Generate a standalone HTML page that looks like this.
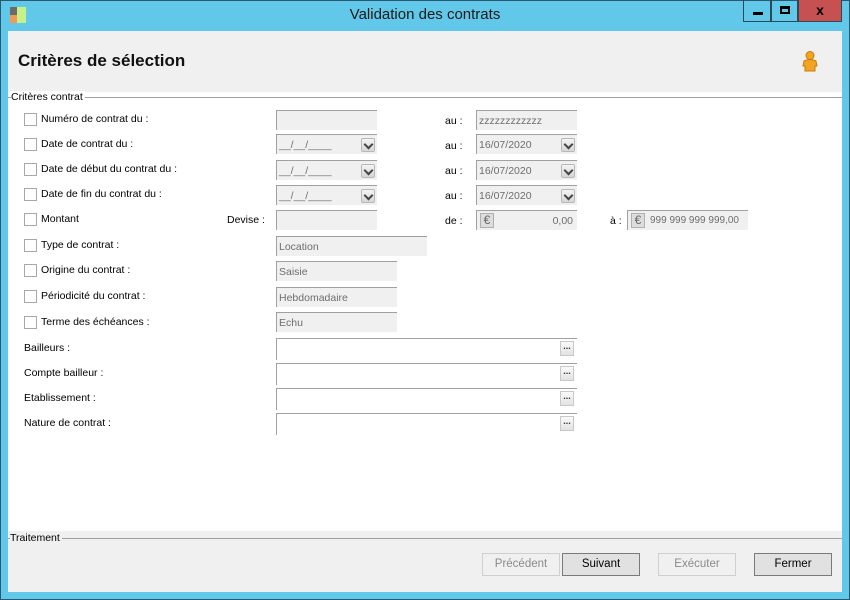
<!DOCTYPE html>
<html><head><meta charset="utf-8"><style>
*{margin:0;padding:0;box-sizing:border-box}
body{width:850px;height:600px;overflow:hidden;background:#62c8ea;font-family:"Liberation Sans",Arial,sans-serif;font-size:10.5px;color:#000;position:relative}
.a{position:absolute;white-space:nowrap}
#frame{left:0;top:0;width:850px;height:600px;border:1px solid #2a5870}
#title{left:0;top:6px;width:850px;text-align:center;font-size:15px;color:#1a1a1a}
.wb{top:0;height:22px;border:1px solid #2a4a5a;border-top:none}
#content{left:8px;top:31px;width:834px;height:561px;background:#fff}
#hdr{left:8px;top:31px;width:834px;height:61px;background:#f0f0f0}
#h1{left:18px;top:51px;font-size:17px;font-weight:bold;color:#111}
.lg{color:#000;background:#fff;padding-right:2px}
.cb{width:13px;height:13px;border:1px solid #a8a8a8;background:#fff}
.f{height:20px;background:#f0f0f0;border-top:1px solid #a0a0a0;border-left:1px solid #a0a0a0;color:#6d6d6d;padding:4px 0 0 2px;font-size:10.5px}
.dd{width:14px;height:14px;border:1px solid #b8b8b8;border-radius:2px;background:linear-gradient(#f4f4f4,#d6d6d6);top:3px;right:2px}
.dd:after{content:"";position:absolute;left:3px;top:2px;width:5px;height:5px;border-right:2px solid #444;border-bottom:2px solid #444;transform:rotate(45deg)}
.e{width:301px;height:22px;background:#fff;border-top:1px solid #a0a0a0;border-left:1px solid #a0a0a0}
.eb{right:3px;top:2px;width:14px;height:15px;border:1px solid #c8c8c8;background:linear-gradient(#fafafa,#e2e2e2);font-size:9px;line-height:9px;text-align:center;color:#333;font-weight:bold}
.eu{width:14px;height:15px;border:1px solid #b0b0b0;background:#ddd;color:#666;font-size:12px;line-height:13px;text-align:center;left:3px;top:2px}
.btn{top:553px;width:78px;height:23px;border:1px solid #adadad;text-align:center;line-height:21px;font-size:11.5px}
</style></head><body>
<div class="a" id="frame"></div>
<div class="a" style="left:10px;top:7px;width:7px;height:8px;background:#6b6b6b"></div>
<div class="a" style="left:10px;top:15px;width:7px;height:8px;background:#f09a5a"></div>
<div class="a" style="left:17px;top:7px;width:9px;height:16px;background:#c6f08a"></div>
<div class="a" id="title">Validation des contrats</div>
<div class="a wb" style="left:743px;width:28px"><div class="a" style="left:9px;top:12px;width:10px;height:3px;background:#000"></div></div>
<div class="a wb" style="left:771px;width:27px"><div class="a" style="left:8px;top:6px;width:10px;height:8px;border:2px solid #000;border-top-width:3px"></div></div>
<div class="a wb" style="left:798px;width:44px;background:#c75050"><div class="a" style="left:0;top:2px;width:42px;text-align:center;font-weight:bold;font-size:14px">x</div></div>
<div class="a" id="content"></div>
<div class="a" id="hdr"></div>
<div class="a" id="h1">Critères de sélection</div>
<svg class="a" style="left:801px;top:50px" width="18" height="22" viewBox="0 0 18 22"><circle cx="9" cy="5.5" r="4" fill="#f3a420" stroke="#c77d10"/><path d="M3 11 Q9 8 15 11 L16 16 L14 16 L14 21 L4 21 L4 16 L2 16 Z" fill="#f3a420" stroke="#c77d10"/></svg>
<div class="a" style="left:8px;top:97px;width:834px;height:1px;background:#a0a0a0"></div>
<div class="a lg" style="left:11px;top:91px">Critères contrat</div>

<div class="a cb" style="left:24px;top:113px"></div><div class="a" style="left:41px;top:113px">Numéro de contrat du :</div>
<div class="a cb" style="left:24px;top:138px"></div><div class="a" style="left:41px;top:138px">Date de contrat du :</div>
<div class="a cb" style="left:24px;top:163px"></div><div class="a" style="left:41px;top:163px">Date de début du contrat du :</div>
<div class="a cb" style="left:24px;top:188px"></div><div class="a" style="left:41px;top:188px">Date de fin du contrat du :</div>
<div class="a cb" style="left:24px;top:213px"></div><div class="a" style="left:41px;top:213px">Montant</div>
<div class="a cb" style="left:24px;top:239px"></div><div class="a" style="left:41px;top:239px">Type de contrat :</div>
<div class="a cb" style="left:24px;top:264px"></div><div class="a" style="left:41px;top:264px">Origine du contrat :</div>
<div class="a cb" style="left:24px;top:290px"></div><div class="a" style="left:41px;top:290px">Périodicité du contrat :</div>
<div class="a cb" style="left:24px;top:316px"></div><div class="a" style="left:41px;top:316px">Terme des échéances :</div>
<div class="a" style="left:24px;top:342px">Bailleurs :</div>
<div class="a" style="left:24px;top:367px">Compte bailleur :</div>
<div class="a" style="left:24px;top:392px">Etablissement :</div>
<div class="a" style="left:24px;top:417px">Nature de contrat :</div>
<div class="a" style="left:227px;top:214px">Devise :</div>

<div class="a f" style="left:276px;top:110px;width:101px"></div>
<div class="a f" style="left:276px;top:134px;width:101px">__/__/____<div class="a dd"></div></div>
<div class="a f" style="left:276px;top:160px;width:101px">__/__/____<div class="a dd"></div></div>
<div class="a f" style="left:276px;top:185px;width:101px">__/__/____<div class="a dd"></div></div>
<div class="a f" style="left:276px;top:210px;width:101px"></div>
<div class="a f" style="left:276px;top:236px;width:151px">Location</div>
<div class="a f" style="left:276px;top:261px;width:121px">Saisie</div>
<div class="a f" style="left:276px;top:287px;width:121px">Hebdomadaire</div>
<div class="a f" style="left:276px;top:312px;width:121px">Echu</div>

<div class="a" style="left:445px;top:115px">au :</div>
<div class="a" style="left:445px;top:140px">au :</div>
<div class="a" style="left:445px;top:165px">au :</div>
<div class="a" style="left:445px;top:190px">au :</div>
<div class="a" style="left:445px;top:215px">de :</div>
<div class="a" style="left:610px;top:215px">à :</div>
<div class="a f" style="left:476px;top:110px;width:101px">zzzzzzzzzzzz</div>
<div class="a f" style="left:476px;top:134px;width:101px">16/07/2020<div class="a dd"></div></div>
<div class="a f" style="left:476px;top:160px;width:101px">16/07/2020<div class="a dd"></div></div>
<div class="a f" style="left:476px;top:185px;width:101px">16/07/2020<div class="a dd"></div></div>
<div class="a f" style="left:476px;top:210px;width:101px;text-align:right;padding-right:4px"><div class="a eu">€</div>0,00</div>
<div class="a f" style="left:627px;top:210px;width:121px;padding-left:22px;font-size:10px"><div class="a eu">€</div>999 999 999 999,00</div>

<div class="a e" style="left:276px;top:338px"><div class="a eb">...</div></div>
<div class="a e" style="left:276px;top:363px"><div class="a eb">...</div></div>
<div class="a e" style="left:276px;top:388px"><div class="a eb">...</div></div>
<div class="a e" style="left:276px;top:413px"><div class="a eb">...</div></div>

<div class="a" style="left:8px;top:531px;width:834px;height:61px;background:#f0f0f0"></div>
<div class="a" style="left:8px;top:538px;width:834px;height:1px;background:#a0a0a0"></div>
<div class="a" style="left:10px;top:532px;background:#f0f0f0;padding-right:2px">Traitement</div>
<div class="a btn" style="left:482px;color:#8a8a8a;border-color:#cfcfcf;background:#f0f0f0">Précédent</div>
<div class="a btn" style="left:562px;background:#e1e1e1;border-color:#7a7a7a">Suivant</div>
<div class="a btn" style="left:658px;color:#8a8a8a;border-color:#cfcfcf;background:#f0f0f0">Exécuter</div>
<div class="a btn" style="left:754px;background:#e1e1e1;border-color:#7a7a7a">Fermer</div>
</body></html>
